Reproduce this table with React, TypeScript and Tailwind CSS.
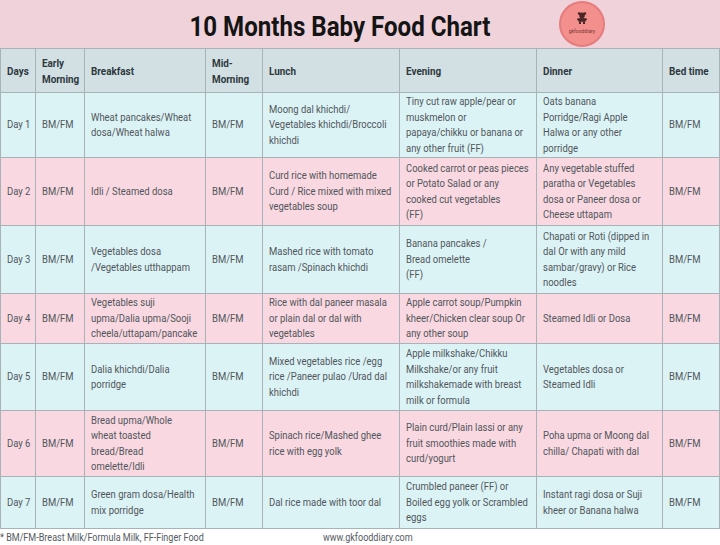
import React from "react"

type Row = {
  day: string
  breakfast: string[]
  lunch: string[]
  evening: string[]
  dinner: string[]
}

const ROWS: Row[] = [
  {
    day: "Day 1",
    breakfast: ["Wheat pancakes/Wheat", "dosa/Wheat halwa"],
    lunch: ["Moong dal khichdi/", "Vegetables khichdi/Broccoli", "khichdi"],
    evening: ["Tiny cut raw apple/pear or", "muskmelon or", "papaya/chikku or banana or", "any other fruit (FF)"],
    dinner: ["Oats banana", "Porridge/Ragi Apple", "Halwa or any other", "porridge"],
  },
  {
    day: "Day 2",
    breakfast: ["Idli / Steamed dosa"],
    lunch: ["Curd rice with homemade", "Curd / Rice mixed with mixed", "vegetables soup"],
    evening: ["Cooked carrot or peas pieces", "or Potato Salad or any", "cooked cut vegetables", "(FF)"],
    dinner: ["Any vegetable stuffed", "paratha or Vegetables", "dosa or Paneer dosa or", "Cheese uttapam"],
  },
  {
    day: "Day 3",
    breakfast: ["Vegetables dosa", "/Vegetables utthappam"],
    lunch: ["Mashed rice with tomato", "rasam /Spinach khichdi"],
    evening: ["Banana pancakes /", "Bread omelette", "(FF)"],
    dinner: ["Chapati or Roti (dipped in", "dal Or with any mild", "sambar/gravy) or Rice", "noodles"],
  },
  {
    day: "Day 4",
    breakfast: ["Vegetables suji", "upma/Dalia upma/Sooji", "cheela/uttapam/pancake"],
    lunch: ["Rice with dal paneer masala", "or plain dal or dal with", "vegetables"],
    evening: ["Apple carrot soup/Pumpkin", "kheer/Chicken clear soup Or", "any other soup"],
    dinner: ["Steamed Idli or Dosa"],
  },
  {
    day: "Day 5",
    breakfast: ["Dalia khichdi/Dalia", "porridge"],
    lunch: ["Mixed vegetables rice /egg", "rice /Paneer pulao /Urad dal", "khichdi"],
    evening: ["Apple milkshake/Chikku", "Milkshake/or any fruit", "milkshakemade with breast", "milk or formula"],
    dinner: ["Vegetables dosa or", "Steamed Idli"],
  },
  {
    day: "Day 6",
    breakfast: ["Bread upma/Whole", "wheat toasted", "bread/Bread", "omelette/Idli"],
    lunch: ["Spinach rice/Mashed ghee", "rice with egg yolk"],
    evening: ["Plain curd/Plain lassi or any", "fruit smoothies made with", "curd/yogurt"],
    dinner: ["Poha upma or Moong dal", "chilla/ Chapati with dal"],
  },
  {
    day: "Day 7",
    breakfast: ["Green gram dosa/Health", "mix porridge"],
    lunch: ["Dal rice made with toor dal"],
    evening: ["Crumbled paneer (FF) or", "Boiled egg yolk or Scrambled", "eggs"],
    dinner: ["Instant ragi dosa or Suji", "kheer or Banana halwa"],
  },
]

function Lines({ lines, bold }: { lines: string[]; bold?: boolean }) {
  return (
    <div
      className={
        bold
          ? "origin-left scale-x-[0.86] whitespace-nowrap text-[11.5px] font-bold leading-[16px] text-[#2e383d]"
          : "origin-left scale-x-[0.86] whitespace-nowrap text-[11px] leading-[15.5px] text-[#50565a]"
      }
    >
      {lines.map((l, i) => (
        <div key={i}>{l}</div>
      ))}
    </div>
  )
}

function Cell({ lines, bg, bold, first }: { lines: string[]; bg: string; bold?: boolean; first?: boolean }) {
  return (
    <div className={`flex items-center border-r border-b border-[#a7b3b6] pl-[6px] ${first ? "border-l" : ""} ${bg}`}>
      <Lines lines={lines} bold={bold} />
    </div>
  )
}

function Logo() {
  return (
    <div className="absolute left-[559px] top-[1px] flex h-[46px] w-[46px] flex-col items-center rounded-full border-2 border-[#e47c7c] bg-[#f38f8c] pt-[9px]">
      <svg width="10" height="12" viewBox="0 0 10 12">
        <circle cx="2.2" cy="1.6" r="1.4" fill="#4a2626" />
        <circle cx="7.8" cy="1.6" r="1.4" fill="#4a2626" />
        <circle cx="5" cy="3.4" r="2.8" fill="#4a2626" />
        <rect x="1.2" y="6.2" width="7.6" height="3.6" rx="1" fill="#4a2626" />
        <rect x="0" y="6.6" width="10" height="1.6" rx="0.8" fill="#4a2626" />
        <rect x="2" y="9.6" width="2" height="2.4" fill="#4a2626" />
        <rect x="6" y="9.6" width="2" height="2.4" fill="#4a2626" />
      </svg>
      <div className="mt-[5px] text-[5px] leading-none text-[#7a3434]">gkfooddiary</div>
    </div>
  )
}

export default function App() {
  const head = ["Days", "Early|Morning", "Breakfast", "Mid-|Morning", "Lunch", "Evening", "Dinner", "Bed time"]
  const headBg = "bg-[#d2e0e4]"

  return (
    <div className="h-[545px] w-[720px] overflow-hidden bg-white font-[Roboto,sans-serif]">
      {/* Title band */}
      <div className="relative flex h-[48px] bg-[#efd2da]">
        <div className="flex w-[680px] justify-center pt-[11px]">
          <h1 className="scale-x-[0.86] whitespace-nowrap text-[28px] font-bold leading-[32px] text-[#141414]">
            10 Months Baby Food Chart
          </h1>
        </div>
        <Logo />
      </div>

      {/* Table */}
      <div className="grid grid-cols-[36px_49px_121px_57px_137px_137px_126px_57px] grid-rows-[44px_65px_68px_68px_50px_67px_66px_52px] border-t border-[#a7b3b6]">
        {head.map((h, i) => (
          <Cell key={h} lines={h.split("|")} bg={headBg} bold first={i === 0} />
        ))}
        {ROWS.map((r, idx) => {
          const bg = idx % 2 === 0 ? "bg-[#dcf3f6]" : "bg-[#f9d8e1]"
          return (
            <React.Fragment key={r.day}>
              <Cell lines={[r.day]} bg={bg} first />
              <Cell lines={["BM/FM"]} bg={bg} />
              <Cell lines={r.breakfast} bg={bg} />
              <Cell lines={["BM/FM"]} bg={bg} />
              <Cell lines={r.lunch} bg={bg} />
              <Cell lines={r.evening} bg={bg} />
              <Cell lines={r.dinner} bg={bg} />
              <Cell lines={["BM/FM"]} bg={bg} />
            </React.Fragment>
          )
        })}
      </div>

      {/* Footer */}
      <div className="flex h-[17px] items-center text-[10.5px] text-[#555b5f]">
        <div className="w-[323px] origin-left scale-x-[0.86] whitespace-nowrap">* BM/FM-Breast Milk/Formula Milk, FF-Finger Food</div>
        <div className="origin-left scale-x-[0.86] whitespace-nowrap">www.gkfooddiary.com</div>
      </div>
    </div>
  )
}
